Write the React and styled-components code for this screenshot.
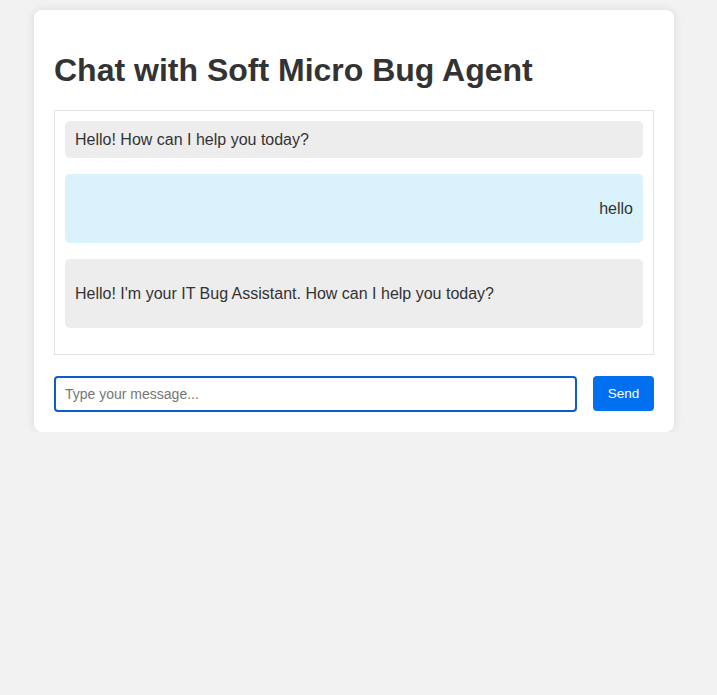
import React, { useState } from "react";
import styled, { createGlobalStyle } from "styled-components";

const GlobalStyle = createGlobalStyle`
  html, body {
    margin: 0;
    padding: 0;
    background: #f2f2f2;
    font-family: "Liberation Sans", Arial, Helvetica, sans-serif;
    color: #333;
  }
  * { box-sizing: border-box; }
`;

const Card = styled.div`
  width: 640px;
  margin: 10px 43px 0 34px;
  padding: 20px;
  background: #fff;
  border-radius: 8px;
  box-shadow: 0 0 10px rgba(0, 0, 0, 0.1);
`;

const Title = styled.h1`
  margin: 22px 0 21px;
  font-size: 32px;
  line-height: 37px;
  font-weight: 700;
  color: #333;
`;

const ChatBox = styled.div`
  border: 1px solid #e3e3e3;
  padding: 10px;
  display: flex;
  flex-direction: column;
  gap: 16px;
  padding-bottom: 26px;
`;

const Message = styled.div`
  padding: 10px;
  border-radius: 5px;
  font-size: 16px;
  line-height: 17px;
  color: #333;
  background: ${(p) => (p.$user ? "#d9f2fb" : "#ededed")};
  text-align: ${(p) => (p.$user ? "right" : "left")};
  p {
    margin: 16px 0;
  }
`;

const InputRow = styled.form`
  display: flex;
  gap: 16px;
  margin-top: 21px;
  align-items: flex-start;
`;

const Input = styled.input`
  flex: 1;
  height: 36px;
  border: 2px solid #0b5ccc;
  border-radius: 4px;
  padding: 0 9px;
  font-family: "Liberation Sans", Arial, sans-serif;
  font-size: 14px;
  color: #333;
  outline: none;
  &::placeholder {
    color: #767676;
  }
`;

const SendButton = styled.button`
  width: 61px;
  height: 35px;
  border: none;
  border-radius: 4px;
  background: #0070f0;
  color: #fff;
  font-family: "Liberation Sans", Arial, sans-serif;
  font-size: 13.5px;
  cursor: pointer;
`;

const initial = [
  { from: "bot", text: "Hello! How can I help you today?", para: false },
  { from: "user", text: "hello", para: true },
  { from: "bot", text: "Hello! I'm your IT Bug Assistant. How can I help you today?", para: true },
];

export default function App() {
  const [value, setValue] = useState("");
  return (
    <>
      <GlobalStyle />
      <Card>
        <Title>Chat with Soft Micro Bug Agent</Title>
        <ChatBox>
          {initial.map((m, i) => (
            <Message key={i} $user={m.from === "user"}>
              {m.para ? <p>{m.text}</p> : m.text}
            </Message>
          ))}
        </ChatBox>
        <InputRow onSubmit={(e) => e.preventDefault()}>
          <Input
            autoFocus
            placeholder="Type your message..."
            value={value}
            onChange={(e) => setValue(e.target.value)}
          />
          <SendButton type="submit">Send</SendButton>
        </InputRow>
      </Card>
    </>
  );
}
